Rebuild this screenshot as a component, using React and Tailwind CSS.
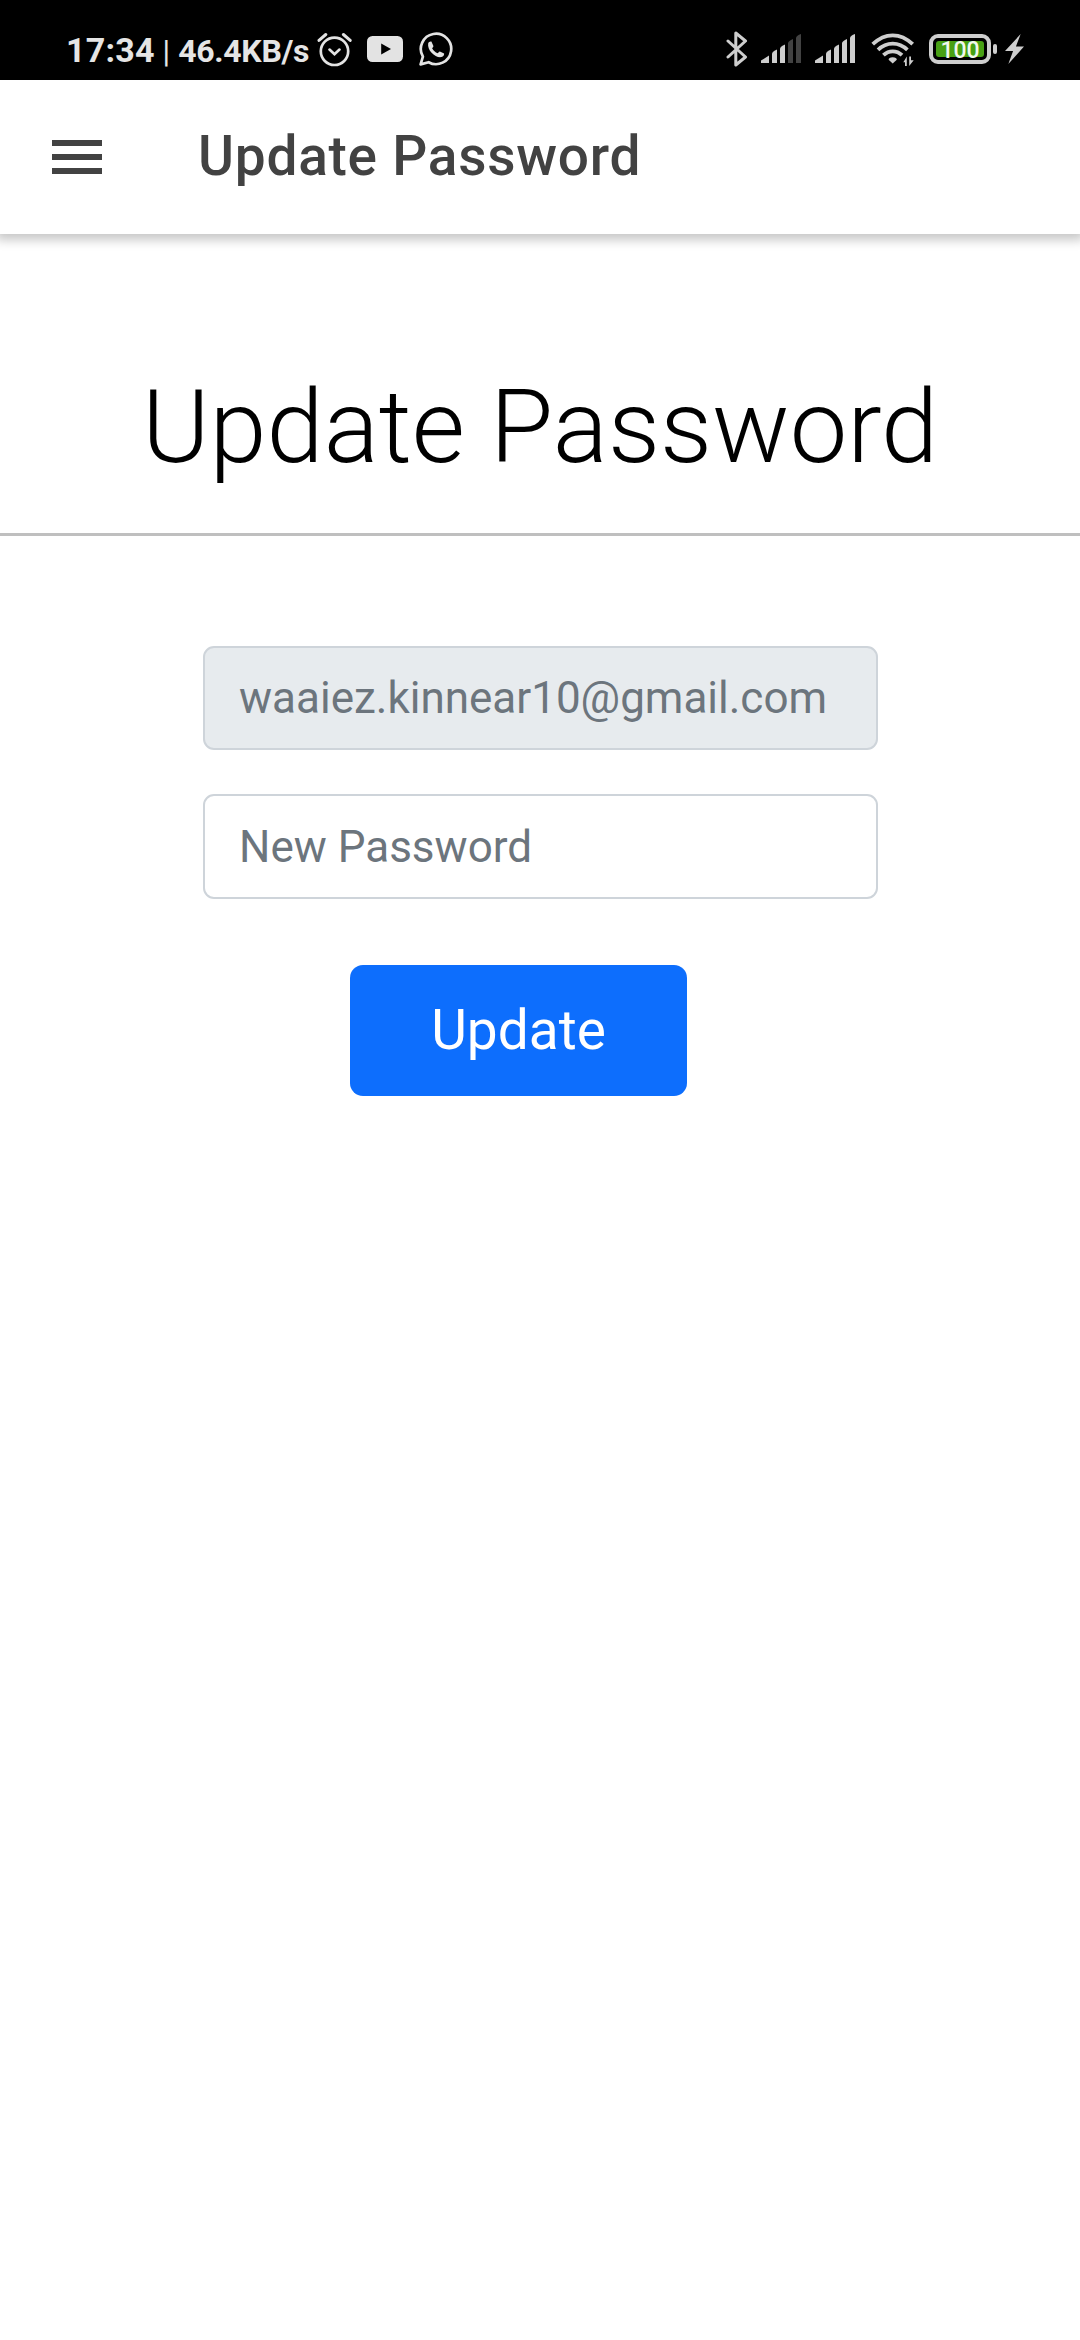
import React from "react";

const G = "#e3e3e3";
const S = "#cecece";

function Alarm() {
  return (
    <svg className="ml-[8px] h-[36px] w-[36px] shrink-0" viewBox="0 0 36 36" fill="none" stroke={G} strokeLinecap="round">
      <circle cx="17.5" cy="20.3" r="13.700" strokeWidth="2.700" />
      <path d="M2 9.400 8.800 3.500M33.200 9.400 26.400 3.500" strokeWidth="3" />
      <path d="M12.500 18.600 17.500 23.200 22.500 18.600" strokeWidth="2.700" />
    </svg>
  );
}

function Youtube() {
  return (
    <svg className="ml-[14px] h-[26px] w-[36px] shrink-0" viewBox="0 0 36 26">
      <rect width="36" height="26" rx="5.5" fill={G} />
      <path d="M14.2 7.6 24 13 14.2 18.4Z" fill="#000" />
    </svg>
  );
}

function Whatsapp() {
  return (
    <svg className="ml-[16px] h-[34px] w-[34px] shrink-0" viewBox="0 0 34 34" fill="none">
      <path d="M1.6 32.4 3.9 24.6A15.2 15.2 0 1 1 9.6 30.2Z" stroke={G} strokeWidth="2.7" strokeLinejoin="round" />
      <path d="M9.2 11.2c.5-1.2 1.8-2 3.2-1.6l2 4.3c.2.8-.8 1.7-1.3 2.4 1.4 2.5 3.2 4 5.6 5 .7-.6 1.4-1.9 2.2-1.8l4.2 2c.2 1.7-.8 3-2.6 3.6C16.8 26.4 7.8 18.4 9.2 11.2Z" fill={G} />
    </svg>
  );
}

function Bluetooth() {
  return (
    <svg className="h-[36px] w-[22px] shrink-0" viewBox="0 0 22 36" fill="none" stroke={S} strokeWidth="3" strokeLinejoin="round" strokeLinecap="round">
      <path d="M2 10 19.500 26 9.800 34V2L19.500 10 2 26" />
    </svg>
  );
}

function Signal({ dim, className }) {
  const c = dim ? "#424242" : S;
  return (
    <svg className={className} viewBox="0 0 40 30">
      <path d="M0 29V26.5L8 21.5V29Z" fill={S} />
      <path d="M11 29V19.5Q11.500 17.5 16 15.5V29Z" fill={S} />
      <path d="M19 29V14.5Q19.500 12.5 24 10.5V29Z" fill={S} />
      <path d="M27 29V9Q27.500 7 32 5V29Z" fill={c} />
      <path d="M35 29V4Q35.500 1.500 40 0V29Z" fill={c} />
    </svg>
  );
}

function Wifi() {
  return (
    <svg className="ml-[16px] h-[34px] w-[44px] shrink-0" viewBox="0 0 44 34" fill="none" stroke={S} strokeWidth="3.800">
      <path d="M1.700 12.200Q11 3.300 21.700 3.300T41.700 12.200" />
      <path d="M7 17.800Q13.500 11.600 21.700 11.600T36.400 17.800" />
      <path d="M12.400 23.200Q16.500 19.300 21.700 19.300T31 23.200" />
      <path d="M17.600 27.800Q17.600 25.200 21.700 25.200T25.800 27.800L21.700 31.600Z" fill={S} stroke="none" />
      <path d="M35.800 24.500V34H34V30.200H32.300ZM38.200 34V24.500H40V28.300H42.700Z" fill={S} stroke="none" />
    </svg>
  );
}

function StatusBar() {
  return (
    <div className="flex h-[80px] w-full shrink-0 items-center bg-black pt-[18px] pl-[66px]">
      <div className="flex w-[243px] shrink-0 items-baseline pt-[3px] whitespace-nowrap font-bold text-[#e5e5e5]">
        <span className="text-[34px] leading-[40px] tracking-[0.2px]">17:34</span>
        <span className="ml-[8px] text-[31px] leading-[40px] font-normal">|</span>
        <span className="ml-[8px] text-[32px] leading-[40px] tracking-[-0.3px]">46.4KB/s</span>
      </div>
      <Alarm />
      <Youtube />
      <Whatsapp />
      <div className="ml-[273px] flex items-center">
        <Bluetooth />
        <Signal dim className="ml-[13px] h-[30px] w-[40px] shrink-0" />
        <Signal className="ml-[14px] h-[30px] w-[40px] shrink-0" />
        <Wifi />
        <div className="ml-[14px] flex h-[30px] w-[62px] shrink-0 items-center justify-center rounded-[9px] border-[4px] border-[#cecece]">
          <div className="flex h-[16px] w-[48px] items-center justify-center rounded-[3px] bg-[#48a014] pt-[2px] text-[23px] leading-none font-medium text-[#f2f8ee]">100</div>
        </div>
        <div className="ml-[2px] h-[10px] w-[4px] shrink-0 rounded-full bg-[#cecece]" />
        <svg className="ml-[8px] h-[30px] w-[19px] shrink-0" viewBox="0 0 20 30" preserveAspectRatio="none" fill={S}>
          <path d="M16.500 0 0 17H8.500L3.500 30 20 12.500H11.500Z" />
        </svg>
      </div>
    </div>
  );
}

export default function App() {
  return (
    <div className="flex h-[2340px] w-[1080px] flex-col overflow-hidden bg-white font-['Roboto',sans-serif]">
      <StatusBar />
      <header className="flex h-[154px] shrink-0 items-center bg-white pl-[52px] shadow-[0_2px_10px_4px_rgba(0,0,0,0.22)]">
        <button className="flex w-[50px] flex-col gap-[8px]" aria-label="Menu">
          <span className="h-[6px] bg-[#424242]" />
          <span className="h-[6px] bg-[#424242]" />
          <span className="h-[6px] bg-[#424242]" />
        </button>
        <span className="ml-[96px] pb-[2px] text-[55px] leading-[64px] font-medium tracking-[0.75px] text-[#424242]">Update Password</span>
      </header>
      <main className="flex flex-col">
        <h1 className="flex h-[299px] items-end justify-center pb-[46px] text-[102.800px] leading-[120px] font-light whitespace-nowrap text-black">Update Password</h1>
        <hr className="h-[3px] border-0 bg-[#bfbfbf]" />
        <form className="ml-[203px] flex w-[675px] flex-col pt-[110px]">
          <input disabled placeholder="waaiez.kinnear10@gmail.com" className="h-[104px] rounded-[11px] border-2 border-[#ced4da] bg-[#e7ebee] px-[34px] text-[44px] placeholder:text-[#6c757d] placeholder:opacity-100" />
          <input placeholder="New Password" className="mt-[44px] h-[105px] rounded-[11px] border-2 border-[#ced4da] bg-white px-[34px] text-[44px] placeholder:text-[#6c757d] placeholder:opacity-100" />
          <button type="button" className="mt-[66px] ml-[147px] h-[131px] w-[337px] rounded-[13px] bg-[#0d6efd] text-[55px] text-white">Update</button>
        </form>
      </main>
    </div>
  );
}
